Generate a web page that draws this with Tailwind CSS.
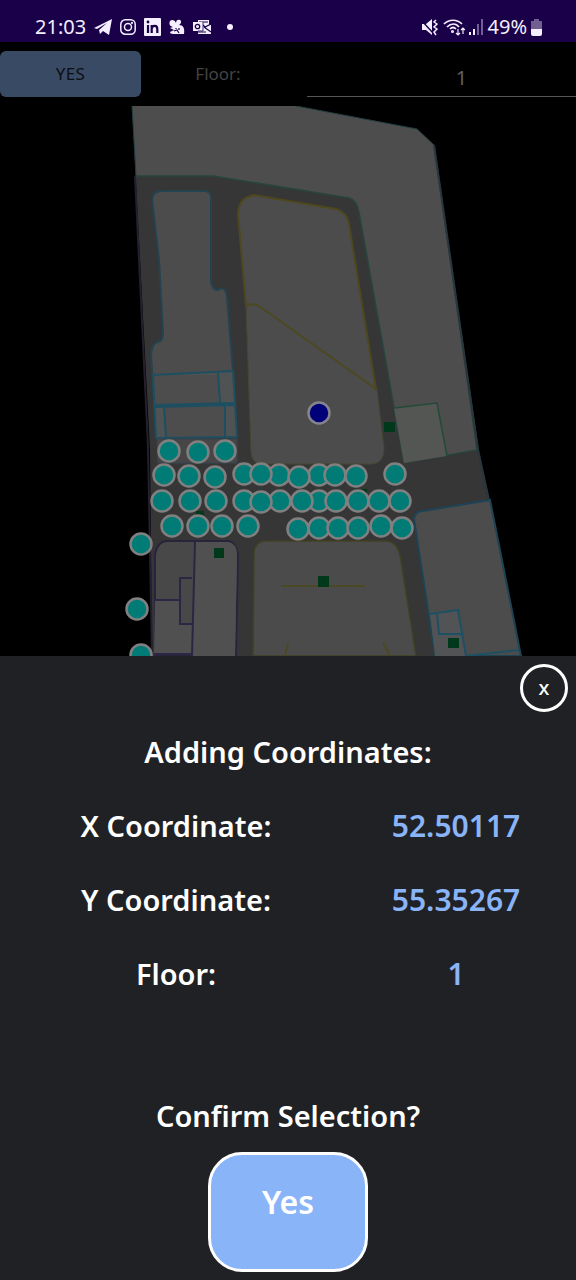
<!DOCTYPE html>
<html lang="en">
<head>
<meta charset="utf-8">
<meta name="viewport" content="width=device-width, initial-scale=1">
<title>Adding Coordinates</title>
<script src="https://cdn.jsdelivr.net/npm/@tailwindcss/browser@4"></script>
</head>
<body class="flex min-h-screen flex-col bg-black font-['Noto_Sans',sans-serif]">
<header class="flex h-[42px] items-center justify-between bg-[#190048] pt-3 pr-[34px] pl-[35px] text-[#f4eeff]">
  <div class="flex items-center gap-2">
    <span class="text-xl leading-6">21:03</span>
    <svg class="h-5 w-[18px]" viewBox="0 0 18 20" fill="currentColor" aria-hidden="true"><path d="M0 11 18 2 15 18 9 14 6 17 5 13 13 6 3 12Z"/></svg>
    <svg class="size-4" viewBox="0 0 16 16" fill="none" stroke="currentColor" stroke-width="1.5" aria-hidden="true"><rect x=".8" y=".8" width="14.4" height="14.4" rx="4.5"/><circle cx="8" cy="8" r="3.5"/><circle cx="12" cy="4" r=".4"/></svg>
    <svg class="h-[18px] w-[17px]" viewBox="0 0 17 18" aria-hidden="true"><rect width="17" height="18" rx="1" fill="currentColor"/><g fill="none" stroke="#190048" stroke-width="2.2"><path d="M4 7v8M7.700 7v8M7.700 10.500c.6-3.500 5.600-3.600 5.600.500v4"/></g><circle cx="4" cy="4" r="1.400" fill="#190048"/></svg>
    <svg class="size-4" viewBox="0 0 16 16" fill="currentColor" aria-hidden="true"><path d="M1 2c2-2 5-1 6 2 0-3 2-4 4-3s1 4-1 5c4 0 6 3 5 9H4c-2 0-3-1-3-2l4-2-4-2 3-1C0 7 0 4 1 2Z"/><path d="M7 9v1M10 9v2M5 12l3-1 2 3" fill="none" stroke="#190048" stroke-width="1.200"/></svg>
    <svg class="h-4 w-[18px]" viewBox="0 0 18 16" aria-hidden="true"><path d="M5 1h11v4l2 1v9H5Z" fill="currentColor"/><path d="M6 3h9M10 6l2 2 6-3M11 8l7 5M5 13h8" fill="none" stroke="#190048" stroke-width="1.200"/><rect x="0" y="3" width="10" height="9" fill="currentColor"/><path d="M10 3v9H5" fill="none" stroke="#190048" stroke-width=".8"/><circle cx="4.500" cy="7.500" r="2.200" fill="none" stroke="#190048" stroke-width="1.300"/></svg>
    <span class="ml-2 size-[6px] rounded-full bg-current"></span>
  </div>
  <div class="flex items-center gap-1">
    <svg class="h-[17px] w-[18px]" viewBox="0 0 18 17" aria-hidden="true"><path d="M1 5h4l6-5v16L5 11H1Z" fill="currentColor"/><path d="m0 1 13 14" stroke="#190048" stroke-width="1.500"/><path d="m15 1-2 2 3 2-3 3 3 2-3 3 2 3" fill="none" stroke="currentColor" stroke-width="1.500"/></svg>
    <svg class="h-[17px] w-[22px]" viewBox="0 0 22 17" fill="none" stroke="currentColor" stroke-width="1.700" aria-hidden="true"><path d="M1 5c5-5 13-5 18 0M4 8c4-4 9-4 12 0M7 10c2-2 4-2 6 0"/><circle cx="9.500" cy="12.500" r=".7"/><path d="M15 10v6m-2-2 2 2 2-2M20 15V9m-2 2 2-2 2 2" stroke-width="1.200"/></svg>
    <svg class="h-[16px] w-[15px]" viewBox="0 0 15 16" fill="currentColor" aria-hidden="true"><path d="M0 13h2v3H0zM4 10h2v6H4z"/><path d="M8 5h2v11H8zM12 0h2v16h-2z" opacity=".4"/></svg>
    <span class="text-xl leading-6">49%</span>
    <svg class="h-[17px] w-[11px]" viewBox="0 0 11 17" fill="currentColor" aria-hidden="true"><path d="M3 0h5v2h3v8H0V2h3Z" opacity=".4"/><path d="M0 10h11v5q0 2-2 2H2q-2 0-2-2Z"/></svg>
  </div>
</header>

<main class="flex flex-1 flex-col">
  <div class="flex h-16 items-center">
    <button type="button" class="h-[46px] w-[141px] shrink-0 rounded-md bg-[#394a64] text-[17px] tracking-wide text-[#0c0e13]">YES</button>
    <label for="floor" class="flex-1 pr-3 text-center text-[17px] text-[#444]">Floor:</label>
    <input id="floor" type="text" value="1" class="h-[46px] w-[269px] border-b border-[#555] bg-transparent pt-2 pl-10 text-center text-xl text-[#606060] outline-none">
  </div>

  <svg class="block w-full" viewBox="0 106 576 550" role="img" aria-label="Floor map with coordinate markers">
    <rect y="106" width="576" height="550" fill="#000"/>
    <path d="M132 106H296L417 129 434 145 479 450 490 500 521 656H152L150 450Z" fill="#363636"/>
    <path d="M132 106H296L417 129 434 145 478 450 404 463 359 215Q357 201 349 198L213 176H136Z" fill="#4d4d4d"/>
    <path d="M136 176H213L349 198Q357 200 359 212L404 463 477 450 434 145" fill="none" stroke="#26453d" stroke-width="1.500"/>
    <path d="M132 106 136 176M296 106 417 129 434 145" fill="none" stroke="#203d40"/>
    <path d="m135 176 13 270 4 210" fill="none" stroke="#24202f" stroke-width="2"/>
    <path d="m434 145 44 305 10 50" fill="none" stroke="#29363b" stroke-width="2"/>

    <path d="M152 199Q153 191 162 191H205Q211 191 211 198V282Q213 291 218 290 225 285 227 296L233 371 237 437H156L151 355Q152 344 157 342 163 342 163 333L159 260Z" fill="#4c4c4c" stroke="#22434f" stroke-width="2"/>
    <path d="m153 374 81-3 3 66-81 1Z" fill="#505354"/>
    <path d="M164 407h61v30h-59zM153 375h65v28l-63 2z" fill="#4d4d4d"/>
    <path d="m153 375 80-4 4 66-81 1ZM153 405l82-2M155 407l81-2M218 373l2 30M164 406l2 31M225 405v32" fill="none" stroke="#1d4e61" stroke-width="2"/>
    <path d="M157 439h80v24h-79z" fill="#474546" stroke="#35464e"/>

    <path d="M238 214Q238 198 254 195L336 209Q347 212 349 224L377 390 384 448Q384 464 371 464H262Q252 464 251 452L246 303Z" fill="#4c4c4c"/>
    <path d="m246 306-8-92Q238 198 254 195L336 209Q347 212 349 224L376 390" fill="none" stroke="#4d481d" stroke-width="2"/>
    <path d="M246 306 251 452Q252 464 262 464H371Q384 464 384 448L377 390" fill="none" stroke="#494631"/>
    <path d="M246 307Q250 302 259 306L376 389" fill="none" stroke="#4c4920" stroke-width="2"/>

    <path d="m394 408 43-5 10 53-43 7Z" fill="#545654"/>
    <path d="m394 408 43-5 10 53" fill="none" stroke="#224b37" stroke-width="1.500"/>

    <path d="M155 656V554Q158 541 167 541H229Q236 543 238 555L236 656Z" fill="#484848" stroke="#29243c" stroke-width="2"/>
    <path d="M195 542h33q9 1 9 13l-2 101h-43z" fill="#505050"/>
    <path d="M155 600h25v24h12v30h-38z" fill="#505050"/>
    <path d="m195 542-3 114M192 578h-12v46h12M154 600h26M154 654h38" fill="none" stroke="#2c2543" stroke-width="2"/>

    <path d="m253 656 1-104Q256 541 265 541H388Q397 543 400 555L416 656Z" fill="#4b4b4b" stroke="#414022" stroke-width="1.500"/>
    <path d="M281 586h84M383 642l7 14M288 644l-3 12" stroke="#4b4924" stroke-width="2"/>

    <path d="M414 519Q415 511 423 511L490 500 521 656H435Z" fill="#4c4c4c" stroke="#1d4355" stroke-width="2"/>
    <path d="m430 614 28-4 8 46h-31z" fill="#515354"/>
    <path d="m430 614 28-4 8 46M437 613l2 21h23M465 656l54-6" fill="none" stroke="#1d5063" stroke-width="2"/>

    <g fill="#00381c"><path d="M384 422h11v10h-11zM214 548h10v10h-10zM318 576h11v11h-11zM448 638h11v10h-11zM196 511h8v5h-8zM361 489h6v4h-6z"/></g>

    <g fill="#007b75" stroke="#808080" stroke-width="2.500">
      <circle cx="169" cy="451" r="10.500"/><circle cx="198" cy="452" r="10.500"/><circle cx="225" cy="451" r="10.500"/>
      <circle cx="164" cy="475" r="10.500"/><circle cx="189" cy="476" r="10.500"/><circle cx="215" cy="477" r="10.500"/><circle cx="244" cy="474" r="10.500"/><circle cx="279" cy="475" r="10.500"/><circle cx="261" cy="474" r="10.500"/><circle cx="319" cy="475" r="10.500"/><circle cx="299" cy="477" r="10.500"/><circle cx="335" cy="475" r="10.500"/><circle cx="356" cy="476" r="10.500"/><circle cx="395" cy="474" r="10.500"/>
      <circle cx="162" cy="501" r="10.500"/><circle cx="190" cy="501" r="10.500"/><circle cx="216" cy="501" r="10.500"/><circle cx="244" cy="501" r="10.500"/><circle cx="280" cy="501" r="10.500"/><circle cx="261" cy="502" r="10.500"/><circle cx="319" cy="501" r="10.500"/><circle cx="302" cy="501" r="10.500"/><circle cx="336" cy="501" r="10.500"/><circle cx="358" cy="501" r="10.500"/><circle cx="379" cy="501" r="10.500"/><circle cx="400" cy="501" r="10.500"/>
      <circle cx="172" cy="526" r="10.500"/><circle cx="198" cy="526" r="10.500"/><circle cx="222" cy="526" r="10.500"/><circle cx="248" cy="526" r="10.500"/><circle cx="298" cy="529" r="10.500"/><circle cx="319" cy="528" r="10.500"/><circle cx="338" cy="528" r="10.500"/><circle cx="358" cy="528" r="10.500"/><circle cx="381" cy="526" r="10.500"/><circle cx="402" cy="528" r="10.500"/>
      <circle cx="141" cy="544" r="10.500"/><circle cx="137" cy="609" r="10.500"/><circle cx="141" cy="655" r="10.500"/>
    </g>
    <circle cx="319" cy="413" r="10.500" fill="#000078" stroke="#85838e" stroke-width="2.500"/>
  </svg>

  <section role="dialog" aria-labelledby="title" class="flex flex-1 flex-col items-center bg-[#202124] px-2 pt-2 pb-2 text-[29px] leading-10 font-semibold text-white">
    <button type="button" aria-label="Close" class="flex size-12 items-center justify-center self-end rounded-full border-3 border-white text-xl leading-6 font-medium">x</button>
    <h1 id="title" class="mt-5">Adding Coordinates:</h1>
    <dl class="mt-[34px] grid w-full grid-cols-[3fr_2fr] gap-y-[34px] text-center">
      <dt class="pr-0">X Coordinate:</dt><dd class="text-[30px] text-[#8ab4f8]">52.50117</dd>
      <dt>Y Coordinate:</dt><dd class="text-[30px] text-[#8ab4f8]">55.35267</dd>
      <dt>Floor:</dt><dd class="text-[30px] text-[#8ab4f8]">1</dd>
    </dl>
    <h2 class="mt-[102px]">Confirm Selection?</h2>
    <button type="button" class="mt-4 h-[120px] w-40 rounded-[34px] border-3 border-white bg-[#8ab4f8] pb-5 text-[32px] font-semibold">Yes</button>
  </section>
</main>
</body>
</html>
